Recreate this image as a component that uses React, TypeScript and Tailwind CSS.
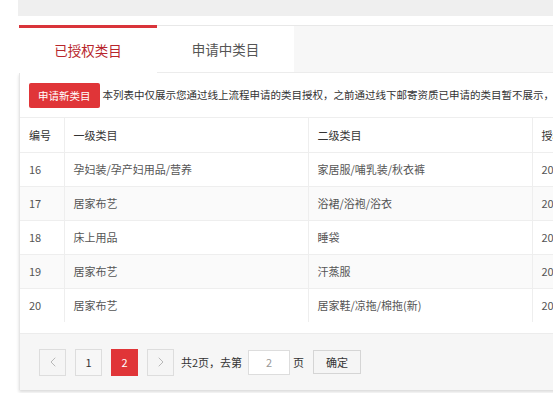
import { ChevronLeft, ChevronRight } from "lucide-react";

const rows = [
  { id: 16, first: "孕妇装/孕产妇用品/营养", second: "家居服/哺乳装/秋衣裤", date: "2016-08-12" },
  { id: 17, first: "居家布艺", second: "浴裙/浴袍/浴衣", date: "2016-08-12" },
  { id: 18, first: "床上用品", second: "睡袋", date: "2016-08-12" },
  { id: 19, first: "居家布艺", second: "汗蒸服", date: "2016-08-12" },
  { id: 20, first: "居家布艺", second: "居家鞋/凉拖/棉拖(新)", date: "2016-08-12" },
];

export default function App() {
  return (
    <div
      className="w-[553px] h-[393px] overflow-hidden bg-white pl-[18px]"
      style={{ fontFamily: '"Microsoft YaHei", "Noto Sans CJK SC", sans-serif' }}
    >
      {/* 上方区块 */}
      <div className="h-[16px] w-[720px] bg-[#efefef]" />

      <div className="mt-[9px] w-[720px] ml-px">
        {/* 标签 */}
        <div className="flex h-[48px] bg-[#f7f7f7] border-t border-[#e8e8e8]">
          <div className="w-[138px] bg-white border-t-[3px] border-t-[#d9343a] -mt-px flex items-center justify-center text-[13.5px] text-[#b8262c]">
            已授权类目
          </div>
          <div className="w-[137px] bg-white border-b border-[#ececec] flex items-center justify-center text-[13.5px] text-[#555]">
            申请中类目
          </div>
          <div className="flex-1 border-b border-[#ececec]" />
        </div>

        {/* 内容 */}
        <div className="border-l border-[#e6e6e6] shadow-[0_2px_3px_rgba(0,0,0,0.15)] bg-white">
          <div className="flex items-center h-[45px] pl-[9px] gap-[3px] border-b border-[#eeeeee] whitespace-nowrap">
            <button className="h-[25px] px-[9px] bg-[#e03538] rounded-[2px] text-white text-[10.5px] leading-[25px]">
              申请新类目
            </button>
            <span className="text-[10.5px] text-[#333]">
              本列表中仅展示您通过线上流程申请的类目授权，之前通过线下邮寄资质已申请的类目暂不展示，但不影响您的正常经营。
            </span>
          </div>

          <table className="border-collapse text-[11px] table-fixed w-[700px]">
            <colgroup>
              <col className="w-[44px]" />
              <col className="w-[244px]" />
              <col className="w-[224px]" />
              <col />
            </colgroup>
            <thead>
              <tr className="h-[34px] text-[#333] text-left">
                <th className="font-normal pl-[9px] border-r border-b border-[#eeeeee]">编号</th>
                <th className="font-normal pl-[9px] border-r border-b border-[#eeeeee]">一级类目</th>
                <th className="font-normal pl-[9px] border-r border-b border-[#eeeeee]">二级类目</th>
                <th className="font-normal pl-[9px] border-b border-[#eeeeee]">授权时间</th>
              </tr>
            </thead>
            <tbody>
              {rows.map((r, i) => (
                <tr key={r.id} className={`h-[34px] text-[#555] ${i % 2 === 1 ? "bg-[#fafafa]" : "bg-white"}`}>
                  <td className={`pl-[9px] border-r border-[#eeeeee] ${i < rows.length - 1 ? "border-b" : ""}`}>{r.id}</td>
                  <td className={`pl-[9px] border-r border-[#eeeeee] ${i < rows.length - 1 ? "border-b" : ""}`}>{r.first}</td>
                  <td className={`pl-[9px] border-r border-[#eeeeee] ${i < rows.length - 1 ? "border-b" : ""}`}>{r.second}</td>
                  <td className={`pl-[9px] border-[#eeeeee] ${i < rows.length - 1 ? "border-b" : ""}`}>{r.date}</td>
                </tr>
              ))}
            </tbody>
          </table>

          {/* 分页 */}
          <div className="mt-[11px] h-[57px] bg-[#f6f6f6] border-t border-[#ececec] flex items-center pl-[19px] text-[11px] text-[#333]">
            <button className="w-[27px] h-[27px] border border-[#dddddd] bg-[#f5f5f5] flex items-center justify-center text-[#999]">
              <ChevronLeft size={16} strokeWidth={1} />
            </button>
            <button className="ml-[9px] w-[27px] h-[27px] border border-[#dddddd] bg-[#f7f7f7] flex items-center justify-center text-[#333]">
              1
            </button>
            <button className="ml-[9px] w-[27px] h-[27px] bg-[#e03538] flex items-center justify-center text-white">
              2
            </button>
            <button className="ml-[9px] w-[27px] h-[27px] border border-[#dddddd] bg-[#f5f5f5] flex items-center justify-center text-[#999]">
              <ChevronRight size={16} strokeWidth={1} />
            </button>
            <span className="ml-[7px]">共2页，去第</span>
            <div className="ml-[6px] w-[42px] h-[25px] border border-[#dddddd] bg-white flex items-center justify-center text-[#999]">
              2
            </div>
            <span className="ml-[3px]">页</span>
            <button className="ml-[9px] w-[48px] h-[24px] border border-[#d5d5d5] bg-[#f5f5f5] text-[#333]">
              确定
            </button>
          </div>
        </div>
      </div>
    </div>
  );
}
